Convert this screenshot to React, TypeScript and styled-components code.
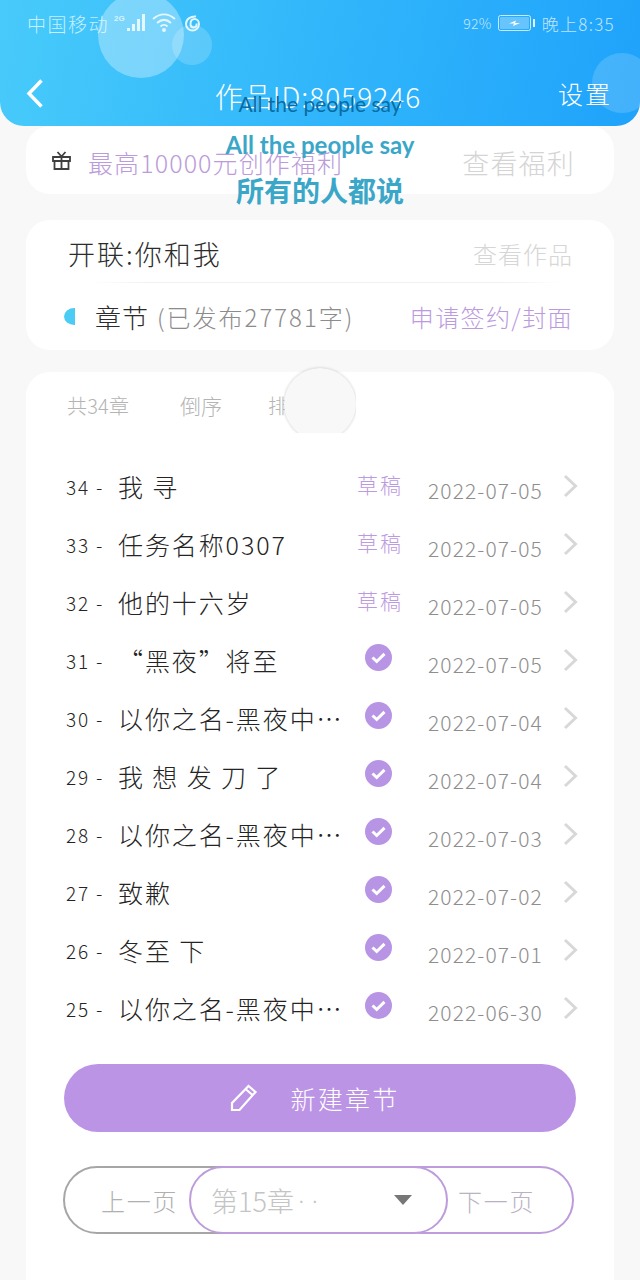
import React from "react";
import styled, { createGlobalStyle } from "styled-components";

const cjk = `"Noto Sans CJK SC", "Noto Sans", sans-serif`;
const Global = createGlobalStyle`
  html, body { margin: 0; padding: 0; background: #f8f8f8; }
  body { font-family: ${cjk}; font-weight: 300; }
  * { box-sizing: border-box; }
`;
const Page = styled.div`
  position: relative; width: 640px; height: 1280px; overflow: hidden; background: #f8f8f8;
`;
const Header = styled.header`
  position: relative; z-index: 2; height: 126px; overflow: hidden;
  border-radius: 0 0 24px 24px;
  background: linear-gradient(100deg, #48cbfa 0%, #33b8fb 45%, #1fa3fb 100%);
  color: #fff;
`;
const Bubble = styled.span<{ $x: number; $y: number; $r: number; $o: number }>`
  position: absolute; left: ${p => p.$x - p.$r}px; top: ${p => p.$y - p.$r}px;
  width: ${p => p.$r * 2}px; height: ${p => p.$r * 2}px; border-radius: 50%;
  background: rgba(255,255,255,${p => p.$o});
`;
const StatusBar = styled.div`
  position: relative; height: 46px; display: flex; align-items: center; justify-content: space-between;
  padding: 0 25px 0 27px; color: rgba(255,255,255,.72);
`;
const StatusGroup = styled.div`display: flex; align-items: center;`;
const Carrier = styled.span`font-size: 19px; letter-spacing: 1.5px; line-height: 1; margin-right: 5px;`;
const Net = styled.span`font: 700 8px "Liberation Sans", sans-serif; margin: -10px 1px 0 0; width: 11px;`;
const Percent = styled.span`font-size: 14px; margin-right: 6px; letter-spacing: .3px;`;
const Clock = styled.span`font-size: 17px; margin-left: 6px; letter-spacing: 1.3px; white-space: nowrap;`;
const Nav = styled.nav`
  position: relative; display: grid; grid-template-columns: 1fr auto 1fr; align-items: center;
  height: 80px; padding: 14px 30px 0 26px;
`;
const Title = styled.h1`
  margin: 6px 0 0; font-size: 28px; font-weight: 300; letter-spacing: 1px; white-space: nowrap; line-height: 36px;
`;
const Settings = styled.span`
  justify-self: end; font-size: 25px; letter-spacing: 2px; margin-right: -2px;
`;
const Lyrics = styled.div`
  position: absolute; z-index: 3; left: 0; right: 0; top: 89px; text-align: center; pointer-events: none;
  font-family: "Lato", ${cjk};
`;
const Lyric = styled.div<{ $size: number; $h: number; $c: string; $w: number }>`
  font-size: ${p => p.$size}px; line-height: ${p => p.$h}px; color: ${p => p.$c}; font-weight: ${p => p.$w};
  white-space: nowrap;
`;
const Main = styled.main`display: flex; flex-direction: column; padding: 0 26px;`;
const Card = styled.section`background: #fff; border-radius: 24px;`;
const GiftCard = styled(Card)`
  height: 68px; display: flex; align-items: center; padding: 4px 39px 0 25px;
`;
const GiftIcon = styled.svg`display: block; margin-top: -4px;`;
const PromoText = styled.span`
  margin-left: 16px; font-size: 25px; color: #bb9bdb; letter-spacing: 1.1px; white-space: nowrap; flex: 1;
`;
const PromoLink = styled.span`font-size: 27px; color: #d4d4d4; letter-spacing: 1.2px; white-space: nowrap;`;
const WorkCard = styled(Card)`
  margin-top: 26px; height: 130px; padding: 0 41px 0 38px; display: flex; flex-direction: column;
`;
const WorkRow = styled.div`
  flex: 1; display: flex; align-items: center; justify-content: space-between;
`;
const WorkTop = styled(WorkRow)`
  flex: 0 0 62px; padding: 4px 0 0 4px;
`;
const WorkDivider = styled.div`
  height: 1px; margin: 0 10px 0 26px;
  background: linear-gradient(90deg, transparent, #f1f1f1 12%, #f1f1f1 88%, transparent);
`;
const WorkName = styled.span`font-size: 27px; color: #2c2c2c; letter-spacing: 2px; white-space: nowrap;`;
const WorkLink = styled.span`font-size: 24px; color: #d6d6d6; letter-spacing: 1px;`;
const ChapterHead = styled.div`display: flex; align-items: center;`;
const HalfDot = styled.i`
  display: block; width: 11px; height: 17px; background: #4ccbf4; border-radius: 11px 0 0 11px / 9px 0 0 9px;
  margin-right: 20px;
`;
const ChapterLabel = styled.span`font-size: 26px; color: #2c2c2c; letter-spacing: 1px;`;
const ChapterCount = styled.span`font-size: 24px; color: #8c8c8c; margin-left: 8px; letter-spacing: 2px; white-space: nowrap;`;
const SignLink = styled.span`font-size: 24px; color: #bc9ade; letter-spacing: 1.4px; white-space: nowrap;`;
const ListCard = styled(Card)`
  margin-top: 22px; height: 908px; border-radius: 24px 24px 0 0; padding: 0 38px;
`;
const Toolbar = styled.div`
  position: relative; height: 66px; display: flex; align-items: center; padding: 0 0 0 3px; font-size: 20px; color: #b4b4b4;
`;
const ToolCount = styled.span`width: 113px; white-space: nowrap; letter-spacing: .2px;`;
const ToolSort = styled.span`width: 88px; white-space: nowrap; font-size: 21px;`;
const FloatClip = styled.div`
  position: absolute; left: 220px; top: -8px; width: 72px; height: 69px; overflow: hidden; padding: 4px 0 0 0;
`;
const FloatBall = styled.div`
  width: 72px; height: 72px; margin: 0; border-radius: 50%; background: #f8f8f8; box-shadow: 0 0 3px rgba(0,0,0,.22);
`;
const List = styled.ul`margin: 19px 0 0; padding: 0 0 0 2px; list-style: none;`;
const Row = styled.li`
  height: 58px; display: grid; grid-template-columns: 284px 60px 153px 15px; align-items: center;
`;
const RowTitle = styled.div`display: flex; align-items: center; color: #242424; white-space: nowrap;`;
const RowIndex = styled.span`font-size: 19px; width: 52px; letter-spacing: 1.8px;`;
const RowName = styled.span`font-size: 25px; letter-spacing: 1.9px; overflow: hidden; text-overflow: ellipsis;`;
const Status = styled.span<{ $icon?: boolean }>`
  display: flex; justify-content: center; margin-top: ${p => (p.$icon ? "-6px" : "-4px")};
  padding-right: ${p => (p.$icon ? "3px" : "0")};
  font-size: 21px; color: #bc9ae0; letter-spacing: 2px; white-space: nowrap;
`;
const DateText = styled.span`
  padding-left: 18px; margin-top: 7px; font-size: 21px; color: #8e8e8e; letter-spacing: 1.1px; white-space: nowrap;
`;
const Chevron = styled.svg`display: block;`;
const PrimaryButton = styled.button`
  display: flex; align-items: center; justify-content: center; gap: 32px;
  width: 512px; height: 68px; margin-top: 27px; padding: 0 10px 0 0; border: 0; border-radius: 34px;
  background: #bc94e6; color: #fff; font: 300 25px ${cjk}; letter-spacing: 2.3px;
`;
const Pager = styled.div`display: flex; width: 512px; height: 68px; margin: 34px 0 0 -1px;`;
const PagerSide = styled.div<{ $c: string; $tc: string; $w: number }>`
  flex: 0 0 ${p => p.$w}px; height: 68px; border: 2px solid ${p => p.$c}; color: ${p => p.$tc};
  border-radius: 34px; background: #fff; display: flex; align-items: center; font-size: 24px; letter-spacing: 1.7px; white-space: nowrap;
`;
const PrevSide = styled(PagerSide)`padding-left: 36px; margin-right: -64px;`;
const NextSide = styled(PagerSide)`padding-left: 70px; margin-left: -62px;`;
const PageSelect = styled.div`
  position: relative; z-index: 1; flex: 0 0 259px; height: 68px; border: 2px solid #bd9cdc; border-radius: 34px;
  background: #fff; display: flex; align-items: center;
  padding: 0 34px 0 20px; color: #c4c4c4; font-size: 27px; white-space: nowrap;
`;
const SelectDots = styled.span`
  flex: 1; font: 400 20px "Liberation Sans", sans-serif; letter-spacing: 7px; margin-left: 4px;
`;
const Caret = styled.i`
  display: block; border: 9px solid transparent; border-top: 10px solid #777; border-bottom: 0;
`;

const Check = () => (
  <svg width="27" height="27" viewBox="0 0 27 27" aria-hidden="true">
    <circle cx="13.5" cy="13.5" r="13.5" fill="#b795e4" />
    <path d="M7.5 13.5l4.2 4 7.8-7.6" fill="none" stroke="#fff" strokeWidth="3" />
  </svg>
);
const RowChevron = () => (
  <Chevron width="15" height="24" viewBox="0 0 15 24" aria-hidden="true">
    <path d="M2 2l10.5 10L2 22" fill="none" stroke="#d8d8d8" strokeWidth="3" />
  </Chevron>
);

const rows: [string, string, boolean, string][] = [
  ["34", "我 寻", true, "2022-07-05"],
  ["33", "任务名称0307", true, "2022-07-05"],
  ["32", "他的十六岁", true, "2022-07-05"],
  ["31", "“黑夜”将至", false, "2022-07-05"],
  ["30", "以你之名-黑夜中…", false, "2022-07-04"],
  ["29", "我 想 发 刀 了", false, "2022-07-04"],
  ["28", "以你之名-黑夜中…", false, "2022-07-03"],
  ["27", "致歉", false, "2022-07-02"],
  ["26", "冬至 下", false, "2022-07-01"],
  ["25", "以你之名-黑夜中…", false, "2022-06-30"],
];

export default function App() {
  return (
    <Page>
      <Global />
      <Header>
        <Bubble $x={141} $y={35} $r={43} $o={0.32} />
        <Bubble $x={192} $y={45} $r={20} $o={0.18} />
        <Bubble $x={622} $y={83} $r={30} $o={0.16} />
        <StatusBar>
          <StatusGroup>
            <Carrier>中国移动</Carrier>
            <Net>2G</Net>
            <svg width="22" height="20" viewBox="0 0 22 20" aria-hidden="true">
              <path d="M1 15h3v3H1zM6 11h3v7H6zM11 6h3v12h-3zM16 1h3v17h-3z" fill="rgba(255,255,255,.8)" />
            </svg>
            <svg width="26" height="20" viewBox="0 0 26 20" style={{ marginLeft: 4 }} aria-hidden="true">
              <path d="M1 6c7-6 15-6 22 0M5 10c4.500-4 9.500-4 14 0M8.500 13.500c2-2 5-2 7 0" fill="none" stroke="rgba(255,255,255,.8)" strokeWidth="2" />
              <circle cx="12" cy="17" r="2" fill="rgba(255,255,255,.8)" />
            </svg>
            <svg width="18" height="18" viewBox="0 0 18 18" style={{ marginLeft: 6 }} aria-hidden="true">
              <path d="M12 2.500C7 2 2 5 2 10a6.500 6.500 0 0013 0c0-3-2-5-4.500-5S6.500 7 6.500 10s2 3.500 3.500 3.500 3-1.500 2.500-4" fill="none" stroke="rgba(255,255,255,.85)" strokeWidth="2" />
            </svg>
          </StatusGroup>
          <StatusGroup>
            <Percent>92%</Percent>
            <svg width="38" height="16" viewBox="0 0 38 16" aria-hidden="true">
              <rect x=".5" y=".5" width="32" height="15" rx="2" fill="none" stroke="rgba(255,255,255,.75)" />
              <rect x="2" y="2" width="29" height="12" rx="1" fill="rgba(255,255,255,.3)" />
              <path d="M35 4h2v8h-2z" fill="rgba(255,255,255,.85)" />
              <path d="M11 8.500l7-3-1 2.500h5l-7 3 1-2.500z" fill="#fff" />
            </svg>
            <Clock>晚上8:35</Clock>
          </StatusGroup>
        </StatusBar>
        <Nav>
          <svg width="18" height="31" viewBox="0 0 18 31" aria-hidden="true">
            <path d="M15.500 2.500L3 15.500l12.500 13" fill="none" stroke="#fff" strokeWidth="3.500" />
          </svg>
          <Title>作品ID:8059246</Title>
          <Settings>设置</Settings>
        </Nav>
      </Header>
      <Lyrics>
        <Lyric $size={21} $h={30} $c="#0a6ca3" $w={400}>All the people say</Lyric>
        <Lyric $size={24} $h={52} $c="#3ba7c8" $w={700}>All the people say</Lyric>
        <Lyric $size={28} $h={40} $c="#3ba7c8" $w={700}>所有的人都说</Lyric>
      </Lyrics>
      <Main>
        <GiftCard>
          <GiftIcon width="21" height="21" viewBox="0 0 21 21" aria-hidden="true">
            <path d="M2 7h17v4H2zM3.500 11h14v8h-14zM10.500 7v12M10.500 6.500L6.500 2M10.500 6.500L14.500 2" fill="none" stroke="#3f3f3f" strokeWidth="1.800" />
          </GiftIcon>
          <PromoText>最高10000元创作福利</PromoText>
          <PromoLink>查看福利</PromoLink>
        </GiftCard>
        <WorkCard>
          <WorkTop>
            <WorkName>开联:你和我</WorkName>
            <WorkLink>查看作品</WorkLink>
          </WorkTop>
          <WorkDivider />
          <WorkRow>
            <ChapterHead>
              <HalfDot />
              <ChapterLabel>章节</ChapterLabel>
              <ChapterCount>(已发布27781字)</ChapterCount>
            </ChapterHead>
            <SignLink>申请签约/封面</SignLink>
          </WorkRow>
        </WorkCard>
        <ListCard>
          <Toolbar>
            <ToolCount>共34章</ToolCount>
            <ToolSort>倒序</ToolSort>
            <span>排</span>
            <FloatClip><FloatBall /></FloatClip>
          </Toolbar>
          <List>
            {rows.map(([n, name, draft, date]) => (
              <Row key={n}>
                <RowTitle>
                  <RowIndex>{n} -</RowIndex>
                  <RowName>{name}</RowName>
                </RowTitle>
                <Status $icon={!draft}>{draft ? "草稿" : <Check />}</Status>
                <DateText>{date}</DateText>
                <RowChevron />
              </Row>
            ))}
          </List>
          <PrimaryButton>
            <svg width="28" height="28" viewBox="0 0 28 28" aria-hidden="true">
              <path d="M2 26v-7L18.500 2l7 6L9.500 26zM15.500 5l7 6" fill="none" stroke="#fff" strokeWidth="2.200" />
            </svg>
            新建章节
          </PrimaryButton>
          <Pager>
            <PrevSide $c="#a6a6a6" $tc="#b0b0b0" $w={190}>上一页</PrevSide>
            <PageSelect>第15章<SelectDots>··</SelectDots><Caret /></PageSelect>
            <NextSide $c="#bd9cdc" $tc="#b9b2c4" $w={188}>下一页</NextSide>
          </Pager>
        </ListCard>
      </Main>
    </Page>
  );
}
